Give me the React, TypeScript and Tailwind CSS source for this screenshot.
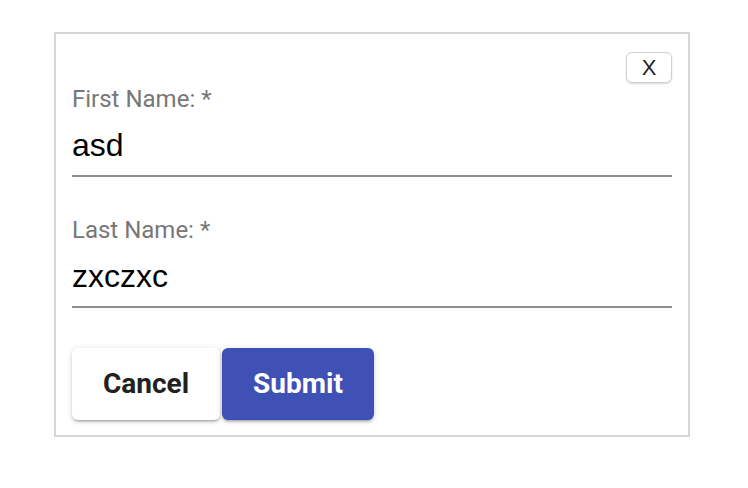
import { useState } from 'react';

export default function App() {
  const [firstName, setFirstName] = useState('asd');
  const [lastName, setLastName] = useState('zxczxc');

  return (
    <div className="min-h-screen bg-white pt-[32px] pl-[54px]">
      <form
        className="w-[636px] border-2 border-[#d6d6d6] px-4 pt-[18px] pb-[15px]"
        onSubmit={(e) => e.preventDefault()}
      >
        {/* Close */}
        <div className="flex justify-end">
          <button
            type="button"
            className="w-[46px] h-[31px] rounded-[6px] border border-[#d0d0d0] bg-white text-[22px] leading-none text-[#222] shadow-[0_1px_2px_rgba(0,0,0,0.15)] font-['Liberation_Sans',Arial,sans-serif]"
          >
            X
          </button>
        </div>

        {/* First name */}
        <label className="block mt-[2px] font-['Roboto',sans-serif]">
          <span className="block text-[24px] leading-[28px] text-[#777]">First Name: *</span>
          <input
            value={firstName}
            onChange={(e) => setFirstName(e.target.value)}
            className="mt-[14px] block w-full border-b-2 border-[#8e8e8e] pb-[12px] text-[32px] leading-[36px] text-black outline-none font-['Liberation_Sans',Arial,sans-serif]"
          />
        </label>

        {/* Last name */}
        <label className="block mt-[39px] font-['Roboto',sans-serif]">
          <span className="block text-[24px] leading-[28px] text-[#777]">Last Name: *</span>
          <input
            value={lastName}
            onChange={(e) => setLastName(e.target.value)}
            className="mt-[14px] block w-full border-b-2 border-[#8e8e8e] pb-[12px] text-[32px] leading-[36px] text-black outline-none font-['Liberation_Sans',Arial,sans-serif]"
          />
        </label>

        {/* Actions */}
        <div className="mt-[40px] flex gap-[2px] font-['Roboto',sans-serif]">
          <button
            type="button"
            className="w-[148px] h-[72px] rounded-[6px] bg-white text-[28px] font-bold text-[#212121] shadow-[0_3px_2px_-2px_rgba(0,0,0,0.2),0_2px_3px_0_rgba(0,0,0,0.14),0_1px_7px_0_rgba(0,0,0,0.12)]"
          >
            Cancel
          </button>
          <button
            type="submit"
            className="w-[152px] h-[72px] rounded-[6px] bg-[#3f51b5] text-[28px] font-bold text-white shadow-[0_3px_2px_-2px_rgba(0,0,0,0.2),0_2px_3px_0_rgba(0,0,0,0.14),0_1px_7px_0_rgba(0,0,0,0.12)]"
          >
            Submit
          </button>
        </div>
      </form>
    </div>
  );
}
